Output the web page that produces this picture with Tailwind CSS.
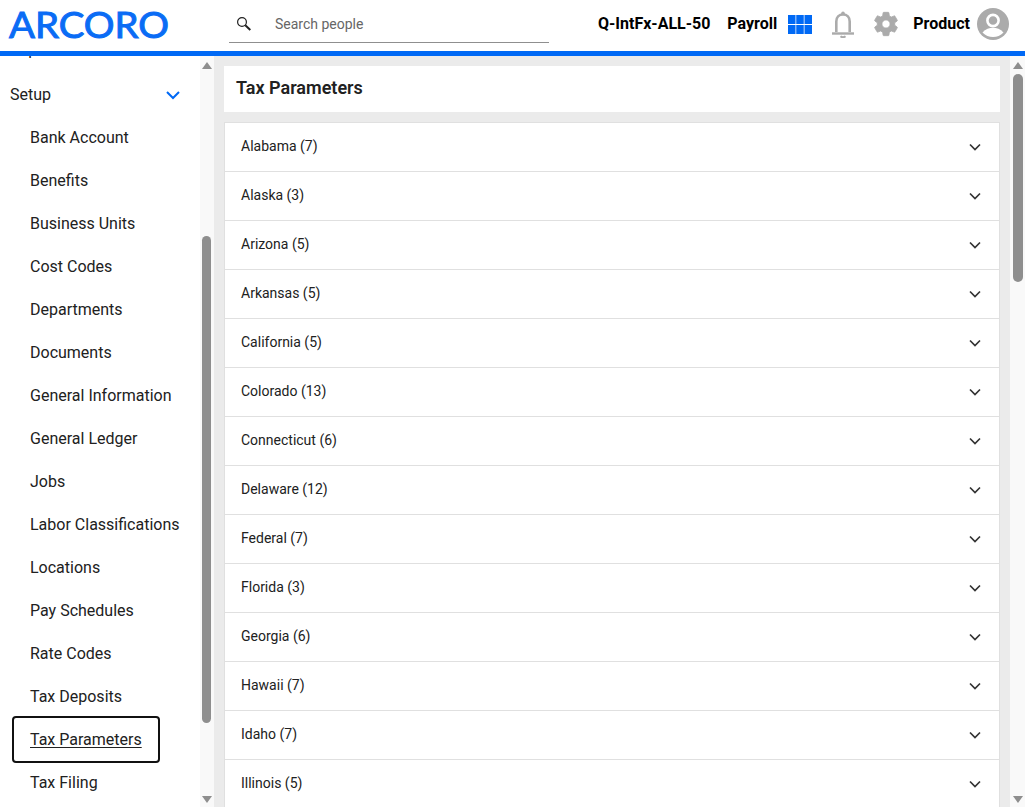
<!DOCTYPE html>
<html lang="en">
<head>
  <meta charset="UTF-8">
  <title>Tax Parameters</title>
  <script src="https://cdn.jsdelivr.net/npm/@tailwindcss/browser@4"></script>
</head>
<body class="h-screen overflow-hidden bg-white font-['Roboto',sans-serif] text-[#212121]">
<!-- Header -->
<header class="h-[56px] border-b-[5px] border-[#0069f5] flex items-center bg-white text-black">
  <div class="w-[229px] pl-[9px] shrink-0 flex items-center mb-[3px]">
    <span class="inline-block origin-left scale-x-[1.065] font-['Lato',sans-serif] text-[36px] leading-none tracking-[0px] text-[#0a6cf5] [-webkit-text-stroke:1px_#0a6cf5]">ARCORO</span>
  </div>
  <div class="w-[320px] h-[38px] self-start mt-[5px] border-b border-[#8f8f8f] flex items-center pl-[6px] shrink-0">
    <svg class="w-[18px] h-[18px]" viewBox="0 0 18 18" fill="none" stroke="#212121"><circle cx="7" cy="7" r="4.4" stroke-width="1.2"/><path d="M10.3 10.3l5 4.6" stroke-width="2"/></svg>
    <span class="ml-[22px] text-sm text-[#666]">Search people</span>
  </div>
  <div class="flex-1 flex items-center mb-[4px]">
    <span class="ml-[49px] font-bold">Q-IntFx-ALL-50</span>
    <span class="ml-[17px] font-bold">Payroll</span>
    <svg class="ml-[11px] w-[24px] h-[19px] mt-[1px]" viewBox="0 0 24 19" fill="#0069f5">
      <rect width="7.5" height="9"/><rect x="8.25" width="7.5" height="9"/><rect x="16.5" width="7.5" height="9"/>
      <rect y="10" width="7.5" height="9"/><rect x="8.25" y="10" width="7.5" height="9"/><rect x="16.5" y="10" width="7.5" height="9"/>
    </svg>
    <svg class="ml-[20px] w-[22px] h-[27px] mt-[1px]" viewBox="0 0 22 27" fill="none" stroke="#ababab" stroke-width="2.6"><path d="M4.300 21V10.500C4.300 6.500 7 3.500 11 3.500s6.700 3 6.700 7V21"/><path d="M0 22.500h22" stroke-width="2.4"/><circle cx="11" cy="2.200" r="1.800" fill="#ababab" stroke="none"/><path d="M8.500 25.200c1.500 1.300 3.500 1.300 5 0" stroke-width="1.800"/></svg>
    <svg class="ml-[18px] w-[28px] h-[28px] mt-[1px]" viewBox="0 0 24 24" fill="#ababab" stroke="#ababab" stroke-width="0.7"><path d="M19.43 12.98c.04-.32.07-.64.07-.98s-.03-.66-.07-.98l2.11-1.65c.19-.15.24-.42.12-.64l-2-3.46c-.12-.22-.39-.3-.61-.22l-2.49 1c-.52-.4-1.08-.73-1.69-.98l-.38-2.65C14.46 2.18 14.25 2 14 2h-4c-.25 0-.46.18-.49.42l-.38 2.65c-.61.25-1.17.59-1.69.98l-2.49-1c-.23-.09-.49 0-.61.22l-2 3.46c-.13.22-.07.49.12.64l2.11 1.65c-.04.32-.07.65-.07.98s.03.66.07.98l-2.11 1.65c-.19.15-.24.42-.12.64l2 3.46c.12.22.39.3.61.22l2.49-1c.52.4 1.08.73 1.69.98l.38 2.65c.03.24.24.42.49.42h4c.25 0 .46-.18.49-.42l.38-2.65c.61-.25 1.17-.59 1.69-.98l2.49 1c.23.09.49 0 .61-.22l2-3.46c.12-.22.07-.49-.12-.64l-2.11-1.65zM12 15.5c-1.93 0-3.5-1.57-3.5-3.5s1.57-3.5 3.5-3.5 3.5 1.57 3.5 3.5-1.57 3.500-3.500 3.500z"/></svg>
    <span class="ml-[13px] font-bold">Product</span>
    <svg class="ml-[7px] w-[32px] h-[32px] mt-[1px]" viewBox="0 0 32 32"><circle cx="16" cy="16" r="16" fill="#ababab"/><circle cx="16" cy="12.500" r="5.600" fill="none" stroke="#fff" stroke-width="2.600"/><path d="M5.500 24.500c3-3.600 7-4.800 10.500-4.800s7.500 1.200 10.500 4.800c-3 3-6.500 4.500-10.500 4.500s-7.500-1.500-10.500-4.500z" fill="#fff"/></svg>
  </div>
</header>

<div class="flex h-[751px]">
  <!-- Sidebar -->
  <aside class="w-[200px] shrink-0 overflow-hidden">
    <nav class="-mt-[29px] text-base text-[#212121]">
      <div class="h-[46px] pl-[10px] flex items-center">Reports</div>
      <div class="h-[43px] pl-[10px] pr-[19px] flex items-center justify-between">
        <span>Setup</span>
        <svg class="w-[16px] h-[10px]" viewBox="0 0 16 10" fill="none" stroke="#0069f5" stroke-width="2"><path d="M2 2l6 6 6-6"/></svg>
      </div>
      <a class="h-[43px] pl-[30px] flex items-center">Bank Account</a>
      <a class="h-[43px] pl-[30px] flex items-center">Benefits</a>
      <a class="h-[43px] pl-[30px] flex items-center">Business Units</a>
      <a class="h-[43px] pl-[30px] flex items-center">Cost Codes</a>
      <a class="h-[43px] pl-[30px] flex items-center">Departments</a>
      <a class="h-[43px] pl-[30px] flex items-center">Documents</a>
      <a class="h-[43px] pl-[30px] flex items-center">General Information</a>
      <a class="h-[43px] pl-[30px] flex items-center">General Ledger</a>
      <a class="h-[43px] pl-[30px] flex items-center">Jobs</a>
      <a class="h-[43px] pl-[30px] flex items-center whitespace-nowrap">Labor Classifications</a>
      <a class="h-[43px] pl-[30px] flex items-center">Locations</a>
      <a class="h-[43px] pl-[30px] flex items-center">Pay Schedules</a>
      <a class="h-[43px] pl-[30px] flex items-center">Rate Codes</a>
      <a class="h-[43px] pl-[30px] flex items-center">Tax Deposits</a>
      <a class="h-[47px] -my-[2px] ml-[12px] w-[148px] pl-[16px] flex items-center border-2 border-[#111] rounded-[4px] underline underline-offset-2">Tax Parameters</a>
      <a class="h-[43px] pl-[30px] flex items-center">Tax Filing</a>
    </nav>
  </aside>
  <!-- Sidebar scrollbar -->
  <div class="w-[14px] pr-[1px] shrink-0 bg-[#f9f9f9] flex flex-col items-center">
    <div class="mt-[6px] w-0 h-0 border-x-[5px] border-x-transparent border-b-[7px] border-b-[#8e8e8e]"></div>
    <div class="mt-[167px] w-[9px] h-[487px] rounded-full bg-[#8e8e8e]"></div>
    <div class="mt-auto mb-[4px] w-0 h-0 border-x-[5px] border-x-transparent border-t-[7px] border-t-[#8e8e8e]"></div>
  </div>

  <!-- Main Content -->
  <main class="flex-1 bg-[#ebebeb] overflow-hidden pl-[10px] pr-[10px] pt-[10px]">
    <div class="h-[46px] bg-white flex items-center pl-[12px] pb-[2px]">
      <h1 class="text-lg font-semibold">Tax Parameters</h1>
    </div>
    <div class="mt-[10px] bg-white text-sm border border-[#e0e0e0]">
      <div class="h-[49px] pl-[16px] pr-[18px] pb-[2px] flex items-center justify-between border-b border-[#e0e0e0]"><span>Alabama (7)</span><svg class="mt-[2px] w-[12px] h-[8px]" viewBox="0 0 12 8" fill="none" stroke="#333" stroke-width="1.7"><path d="M1 1.500l5 5 5-5"/></svg></div>
      <div class="h-[49px] pl-[16px] pr-[18px] pb-[2px] flex items-center justify-between border-b border-[#e0e0e0]"><span>Alaska (3)</span><svg class="mt-[2px] w-[12px] h-[8px]" viewBox="0 0 12 8" fill="none" stroke="#333" stroke-width="1.7"><path d="M1 1.500l5 5 5-5"/></svg></div>
      <div class="h-[49px] pl-[16px] pr-[18px] pb-[2px] flex items-center justify-between border-b border-[#e0e0e0]"><span>Arizona (5)</span><svg class="mt-[2px] w-[12px] h-[8px]" viewBox="0 0 12 8" fill="none" stroke="#333" stroke-width="1.7"><path d="M1 1.500l5 5 5-5"/></svg></div>
      <div class="h-[49px] pl-[16px] pr-[18px] pb-[2px] flex items-center justify-between border-b border-[#e0e0e0]"><span>Arkansas (5)</span><svg class="mt-[2px] w-[12px] h-[8px]" viewBox="0 0 12 8" fill="none" stroke="#333" stroke-width="1.7"><path d="M1 1.500l5 5 5-5"/></svg></div>
      <div class="h-[49px] pl-[16px] pr-[18px] pb-[2px] flex items-center justify-between border-b border-[#e0e0e0]"><span>California (5)</span><svg class="mt-[2px] w-[12px] h-[8px]" viewBox="0 0 12 8" fill="none" stroke="#333" stroke-width="1.7"><path d="M1 1.500l5 5 5-5"/></svg></div>
      <div class="h-[49px] pl-[16px] pr-[18px] pb-[2px] flex items-center justify-between border-b border-[#e0e0e0]"><span>Colorado (13)</span><svg class="mt-[2px] w-[12px] h-[8px]" viewBox="0 0 12 8" fill="none" stroke="#333" stroke-width="1.7"><path d="M1 1.500l5 5 5-5"/></svg></div>
      <div class="h-[49px] pl-[16px] pr-[18px] pb-[2px] flex items-center justify-between border-b border-[#e0e0e0]"><span>Connecticut (6)</span><svg class="mt-[2px] w-[12px] h-[8px]" viewBox="0 0 12 8" fill="none" stroke="#333" stroke-width="1.7"><path d="M1 1.500l5 5 5-5"/></svg></div>
      <div class="h-[49px] pl-[16px] pr-[18px] pb-[2px] flex items-center justify-between border-b border-[#e0e0e0]"><span>Delaware (12)</span><svg class="mt-[2px] w-[12px] h-[8px]" viewBox="0 0 12 8" fill="none" stroke="#333" stroke-width="1.7"><path d="M1 1.500l5 5 5-5"/></svg></div>
      <div class="h-[49px] pl-[16px] pr-[18px] pb-[2px] flex items-center justify-between border-b border-[#e0e0e0]"><span>Federal (7)</span><svg class="mt-[2px] w-[12px] h-[8px]" viewBox="0 0 12 8" fill="none" stroke="#333" stroke-width="1.7"><path d="M1 1.500l5 5 5-5"/></svg></div>
      <div class="h-[49px] pl-[16px] pr-[18px] pb-[2px] flex items-center justify-between border-b border-[#e0e0e0]"><span>Florida (3)</span><svg class="mt-[2px] w-[12px] h-[8px]" viewBox="0 0 12 8" fill="none" stroke="#333" stroke-width="1.7"><path d="M1 1.500l5 5 5-5"/></svg></div>
      <div class="h-[49px] pl-[16px] pr-[18px] pb-[2px] flex items-center justify-between border-b border-[#e0e0e0]"><span>Georgia (6)</span><svg class="mt-[2px] w-[12px] h-[8px]" viewBox="0 0 12 8" fill="none" stroke="#333" stroke-width="1.7"><path d="M1 1.500l5 5 5-5"/></svg></div>
      <div class="h-[49px] pl-[16px] pr-[18px] pb-[2px] flex items-center justify-between border-b border-[#e0e0e0]"><span>Hawaii (7)</span><svg class="mt-[2px] w-[12px] h-[8px]" viewBox="0 0 12 8" fill="none" stroke="#333" stroke-width="1.7"><path d="M1 1.500l5 5 5-5"/></svg></div>
      <div class="h-[49px] pl-[16px] pr-[18px] pb-[2px] flex items-center justify-between border-b border-[#e0e0e0]"><span>Idaho (7)</span><svg class="mt-[2px] w-[12px] h-[8px]" viewBox="0 0 12 8" fill="none" stroke="#333" stroke-width="1.7"><path d="M1 1.500l5 5 5-5"/></svg></div>
      <div class="h-[49px] pl-[16px] pr-[18px] pb-[2px] flex items-center justify-between border-b border-[#e0e0e0]"><span>Illinois (5)</span><svg class="mt-[2px] w-[12px] h-[8px]" viewBox="0 0 12 8" fill="none" stroke="#333" stroke-width="1.7"><path d="M1 1.500l5 5 5-5"/></svg></div>
    </div>
  </main>
  <!-- Main scrollbar -->
  <div class="w-[15px] shrink-0 bg-[#f9f9f9] flex flex-col items-center">
    <div class="mt-[6px] w-0 h-0 border-x-[5px] border-x-transparent border-b-[7px] border-b-[#8e8e8e]"></div>
    <div class="mt-[5px] w-[10px] h-[208px] rounded-full bg-[#8e8e8e]"></div>
    <div class="mt-auto mb-[4px] w-0 h-0 border-x-[5px] border-x-transparent border-t-[7px] border-t-[#8e8e8e]"></div>
  </div>
</div>
</body>
</html>
